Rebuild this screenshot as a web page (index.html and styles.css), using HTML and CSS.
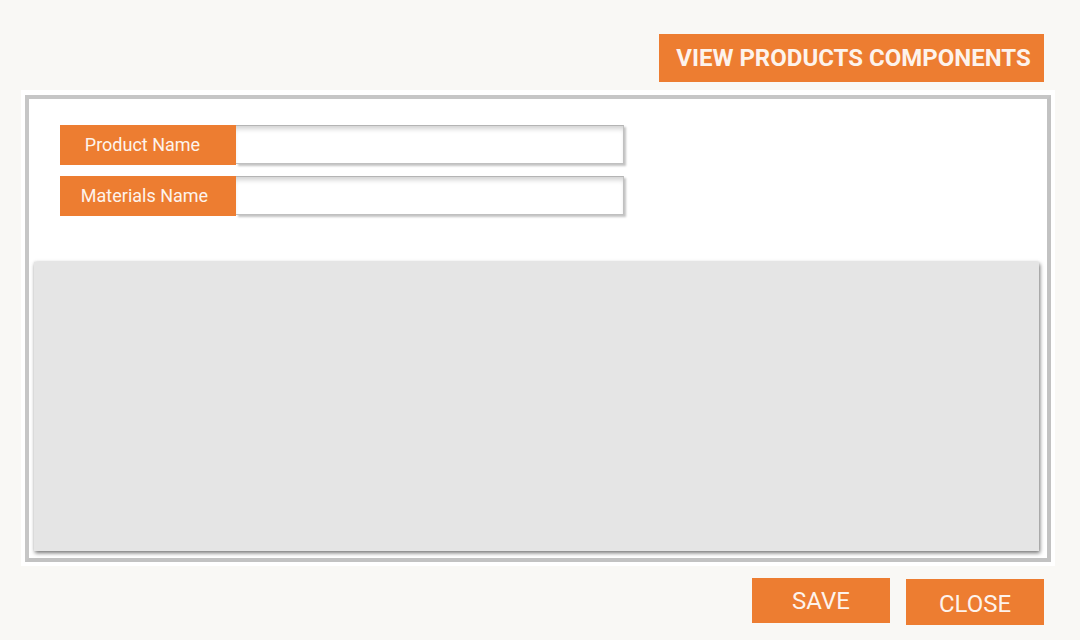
FILE: index.html
```html
<!DOCTYPE html>
<html>
<head>
<meta charset="utf-8">
<link rel="stylesheet" href="styles.css">
</head>
<body>
<div class="topbar">
  <button class="btn btn-view">VIEW PRODUCTS COMPONENTS</button>
</div>
<div class="panel">
  <div class="panel-inner">
    <div class="fields">
      <div class="field">
        <div class="label label-product">Product Name</div>
        <div class="input"></div>
      </div>
      <div class="field">
        <div class="label label-materials">Materials Name</div>
        <div class="input"></div>
      </div>
    </div>
    <div class="grid"></div>
  </div>
</div>
<div class="actions">
  <button class="btn btn-action btn-save">SAVE</button>
  <button class="btn btn-action btn-close">CLOSE</button>
</div>
</body>
</html>
```
FILE: styles.css
```css
html, body {
  margin: 0;
  padding: 0;
}
body {
  background: #f9f8f5;
  font-family: Roboto, "Liberation Sans", sans-serif;
  width: 1080px;
  height: 640px;
  overflow: hidden;
}
.btn {
  border: none;
  background: #ed7d31;
  color: #fdf3ec;
  font-family: Roboto, "Liberation Sans", sans-serif;
  padding: 0;
  margin: 0;
  cursor: pointer;
}
.topbar {
  display: flex;
  justify-content: flex-end;
  padding: 34px 36px 0 0;
}
.btn-view {
  width: 385px;
  height: 48px;
  font-size: 24px;
  font-weight: 700;
  padding-left: 4px;
}
.panel {
  margin: 8px 0 0 21px;
  width: 1034px;
  box-sizing: border-box;
  background: #ffffff;
  padding: 5px 4px 4px 4px;
}
.panel-inner {
  border: 4px solid #c2c2c2;
  border-top-color: #c6c6c6;
  border-left-color: #c6c6c6;
  height: 459px;
  box-sizing: content-box;
  background: #fff;
  display: flex;
  flex-direction: column;
}
.fields {
  display: flex;
  flex-direction: column;
  gap: 11px;
  padding: 26px 0 0 31px;
}
.field {
  display: flex;
  height: 40px;
}
.label {
  width: 176px;
  height: 40px;
  background: #ed7d31;
  color: #fdf3ec;
  font-size: 18px;
  line-height: 40px;
  text-align: center;
  box-sizing: border-box;
  position: relative;
  z-index: 1;
}
.label-product {
  padding-right: 11px;
}
.label-materials {
  padding-right: 7px;
}
.input {
  width: 387px;
  height: 37px;
  background: #fff;
  border-top: 1px solid #b4b4b4;
  border-right: 1px solid #c0c0c0;
  border-bottom: 1px solid #c0c0c0;
  box-shadow: inset 0 5px 5px -2px rgba(0, 0, 0, 0.18), 2px 2px 2px rgba(0, 0, 0, 0.24);
}
.grid {
  margin: 46px 8px 0 5px;
  height: 289px;
  background: #e5e5e5;
  box-shadow: 1px 2px 4px rgba(0, 0, 0, 0.55), 0 -1px 2px rgba(0, 0, 0, 0.06);
}
.actions {
  display: flex;
  justify-content: flex-end;
  align-items: flex-start;
  gap: 16px;
  padding: 12px 36px 0 0;
}
.btn-action {
  width: 138px;
  height: 45px;
  font-size: 24px;
  font-weight: 400;
}
.btn-close {
  margin-top: 1px;
  height: 46px;
  padding-top: 4px;
}
```
